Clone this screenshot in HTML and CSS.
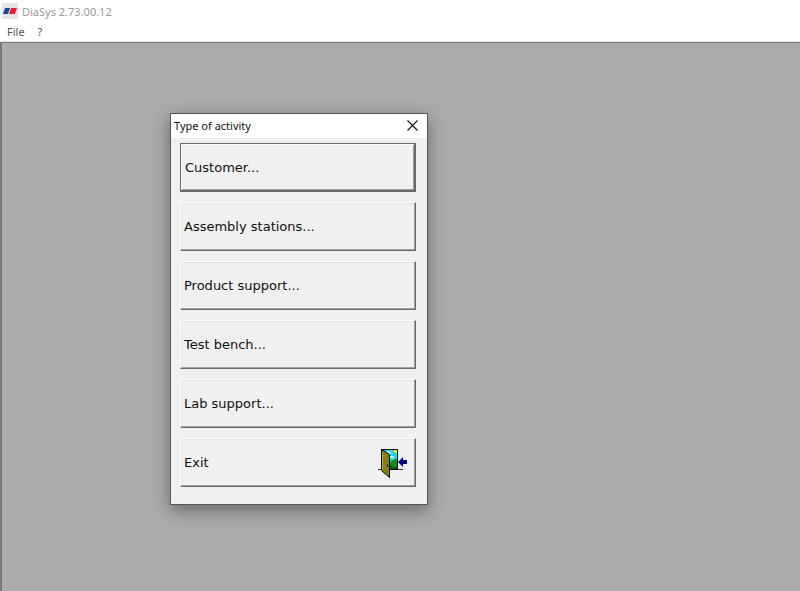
FILE: index.html
```html
<!DOCTYPE html>
<html lang="en">
<head>
<meta charset="utf-8">
<title>DiaSys 2.73.00.12</title>
<link rel="stylesheet" href="styles.css">
</head>
<body>
<header class="titlebar">
  <svg class="app-icon" viewBox="0 0 16 16" aria-hidden="true">
    <path fill="#e4e4e6" d="M0 0h16v16H0z"/>
    <path fill="#154a9c" d="M3 5h5l-2 6H1z"/>
    <path fill="#ed1c2e" d="M9 5h6l-2 6H7z"/>
  </svg>
  <span>DiaSys 2.73.00.12</span>
</header>
<nav class="menubar">
  <button type="button">File</button>
  <button type="button">?</button>
</nav>
<main class="workspace">
  <section class="dialog" role="dialog" aria-labelledby="dialog-title">
    <header class="dialog-header">
      <h1 id="dialog-title">Type of activity</h1>
      <button type="button" class="close" aria-label="Close">
        <svg viewBox="0 0 11 11" aria-hidden="true"><path d="M.5.5l10 10M10.500.5l-10 10" fill="none" stroke="#111" stroke-width="1.100"/></svg>
      </button>
    </header>
    <div class="choices">
      <button type="button" class="choice focused">Customer...</button>
      <button type="button" class="choice">Assembly stations...</button>
      <button type="button" class="choice">Product support...</button>
      <button type="button" class="choice">Test bench...</button>
      <button type="button" class="choice">Lab support...</button>
      <button type="button" class="choice">Exit
        <svg class="exit-icon" viewBox="0 0 30 30" aria-hidden="true">
          <path d="M0 21.500h25" stroke="#333"/>
          <path fill="#19d7ee" stroke="#000" d="M3.500 1.500h16v20h-16z"/>
          <path fill="#c8f8fb" d="M8 3h3l3 3h-3zM12 8h4v2h-4z"/>
          <path fill="#f4f02c" d="M16 2h3v3h-2l-1-1z"/>
          <path fill="#148a22" d="M12 14l2-2h2l1-1h2v10h-7z"/>
          <path fill="#075c10" d="M12 17h2v2h5v2h-7z"/>
          <path fill="#858018" stroke="#000" d="M3.500 1.500l8 5v23l-8-7z"/>
          <path stroke="#b6b13a" d="M4.500 4v18"/>
          <path fill="#222" d="M9 16h1v3H9z"/>
          <path fill="#000080" d="M20 14l5-5v3h4v4h-4v3z"/>
        </svg>
      </button>
    </div>
  </section>
</main>
</body>
</html>
```
FILE: styles.css
```css
* {
  box-sizing: border-box;
}

body {
  margin: 0;
  min-height: 100vh;
  display: flex;
  flex-direction: column;
  background: #fff;
  color: #111;
  font-family: "Noto Sans", "Open Sans", sans-serif;
  font-size: 11px;
}

button {
  font: inherit;
  color: inherit;
  background: none;
  border: 0;
  padding: 0;
}

.titlebar {
  display: flex;
  align-items: center;
  gap: 4px;
  height: 22px;
  padding: 0 2px;
  color: #999;
}

.app-icon {
  width: 16px;
  height: 16px;
}

.menubar {
  display: flex;
  align-items: flex-start;
  gap: 13px;
  height: 20px;
  padding: 2px 7px 0;
  color: #555;
  border-bottom: 1px solid #e8e8e8;
}

.workspace {
  flex: 1;
  padding: 70px 168px;
  background: #ababab;
  border-top: 2px solid #777;
  border-left: 2px solid #777;
  border-image: linear-gradient(#777, #777) 1;
  border-width: 1px 0 0 2px;
}

.dialog {
  width: 258px;
  background: #f0f0f0;
  border: 1px solid #555;
  box-shadow: 0 5px 16px rgba(0, 0, 0, 0.4);
}

.dialog-header {
  display: flex;
  align-items: center;
  justify-content: space-between;
  height: 24px;
  padding: 0 9px 1px 3px;
  background: #fff;
}

h1 {
  margin: 0;
  font-size: 11px;
  font-weight: 400;
}

.close {
  display: flex;
}

.close svg {
  width: 11px;
  height: 11px;
}

.choices {
  display: flex;
  flex-direction: column;
  gap: 10px;
  padding: 5px 11px 17px 9px;
}

.choice {
  display: flex;
  align-items: center;
  justify-content: space-between;
  height: 49px;
  padding: 0 7px 0 3px;
  border: 1px solid;
  border-color: #fff #696969 #696969 #fff;
  box-shadow: inset -1px -1px #a0a0a0, inset 1px 1px #e3e3e3;
  font-family: Verdana, "DejaVu Sans", sans-serif;
  font-size: 13px;
}

.choice.focused {
  padding-left: 4px;
  border-color: #696969;
  box-shadow: inset -1px -1px #696969, inset 1px 1px #fff, inset -2px -2px #a0a0a0;
}

.exit-icon {
  width: 30px;
  height: 30px;
}
```
